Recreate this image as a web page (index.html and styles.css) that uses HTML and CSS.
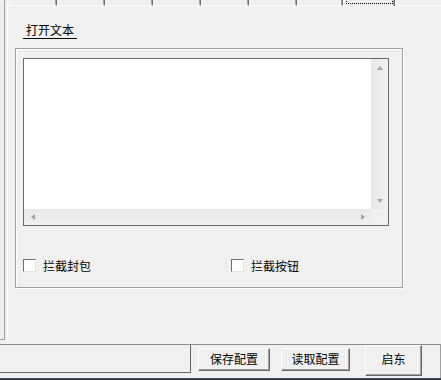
FILE: index.html
```html
<!DOCTYPE html>
<html>
<head>
<meta charset="utf-8">
<link rel="stylesheet" href="styles.css">
</head>
<body>
<div class="win">
  <div class="main">
    <div class="stub"></div>
    <div class="tabctrl">
      <div class="tabs">
        <div class="lead"></div>
        <div class="tab"></div>
        <div class="tab"></div>
        <div class="tab"></div>
        <div class="tab"></div>
        <div class="tab"></div>
        <div class="tab"></div>
        <div class="tab t7"></div>
        <div class="tab sel"><div class="focus"></div></div>
        <div class="tab last"></div>
      </div>
      <div class="page">
        <div class="head">打开文本</div>
        <div class="group">
          <div class="memo">
            <div class="memo-top">
              <div class="text"></div>
              <div class="vscroll">
                <div class="sbtn"><span class="arr up"></span></div>
                <div class="sbtn"><span class="arr down"></span></div>
              </div>
            </div>
            <div class="memo-bottom">
              <div class="hscroll">
                <div class="sbtn"><span class="arr left"></span></div>
                <div class="sbtn"><span class="arr right"></span></div>
              </div>
              <div class="corner"></div>
            </div>
          </div>
          <div class="checks">
            <label class="chk c1"><span class="box"></span><span class="lbl">拦截封包</span></label>
            <label class="chk"><span class="box"></span><span class="lbl">拦截按钮</span></label>
          </div>
        </div>
      </div>
    </div>
  </div>
  <div class="bottom">
    <div class="status"></div>
    <div class="btn b1">保存配置</div>
    <div class="btn b2">读取配置</div>
    <div class="btn b3">启东</div>
  </div>
  <div class="frame"></div>
</div>
</body>
</html>
```
FILE: styles.css
```css
* { box-sizing: border-box; margin: 0; padding: 0; }
html, body { width: 441px; height: 380px; overflow: hidden; }
body {
  background: #f0f0f0;
  font-family: "Noto Sans CJK SC", "Noto Sans", sans-serif;
  font-size: 12px;
  color: #000;
}
.win { display: flex; flex-direction: column; width: 441px; height: 380px; }
.main { display: flex; height: 344px; flex: none; }
.stub {
  width: 5px; height: 340px; flex: none;
  border-right: 1px solid #a0a0a0;
  border-bottom: 1px solid #a0a0a0;
}
.tabctrl { margin-left: 2px; flex: 1; display: flex; flex-direction: column; min-width: 0; }
.tabs { display: flex; height: 6px; flex: none; }
.lead { width: 2px; flex: none; border-bottom: 1px solid #fff; }
.tab {
  width: 48px; flex: none;
  border-left: 1px solid #fff;
  border-right: 1px solid #696969;
  border-bottom: 1px solid #fff;
  box-shadow: inset -1px 0 0 #a0a0a0;
}
.tab.t7 { width: 46px; }
.tab.sel { width: 52px; border-bottom: none; display: flex; align-items: flex-end; }
.tab.last { width: 60px; }
.focus {
  margin-left: 2px; width: 47px; height: 6px; margin-bottom: 2px;
  border: 1px dotted #000; border-top: none;
}
.page { flex: 1; border-left: 1px solid #fff; display: flex; flex-direction: column; }
.head {
  margin: 16px 0 0 15px;
  width: 54px; height: 17px;
  line-height: 16px;
  padding-left: 3px;
  border-bottom: 1px solid #000;
}
.group {
  margin: 9px 0 0 7px;
  width: 388px; height: 240px;
  border: 1px solid #a0a0a0;
  box-shadow: inset 1px 1px 0 #fff, 1px 1px 0 #fff;
  padding: 9px 0 0 7px;
}
.memo {
  width: 366px; height: 168px;
  border: 1px solid #6a6a6a;
  display: flex; flex-direction: column;
}
.memo-top { display: flex; height: 150px; }
.text { flex: 1; background: #fff; }
.vscroll {
  width: 17px;
  background: linear-gradient(to right, #e8e8e8, #f0f0f0);
  display: flex; flex-direction: column; justify-content: space-between;
}
.memo-bottom { display: flex; height: 16px; }
.hscroll {
  flex: 1;
  background: linear-gradient(to bottom, #e8e8e8, #f0f0f0);
  display: flex; justify-content: space-between;
}
.corner { width: 17px; background: #f0f0f0; }
.sbtn { width: 17px; height: 17px; display: flex; align-items: center; justify-content: center; }
.hscroll .sbtn { height: 16px; }
.arr { width: 0; height: 0; display: block; }
.arr.up { border-left: 3.5px solid transparent; border-right: 3.5px solid transparent; border-bottom: 4px solid #a3a3a3; }
.arr.down { border-left: 3.5px solid transparent; border-right: 3.5px solid transparent; border-top: 4px solid #a3a3a3; }
.arr.left { border-top: 3.5px solid transparent; border-bottom: 3.5px solid transparent; border-right: 4px solid #a3a3a3; }
.arr.right { border-top: 3.5px solid transparent; border-bottom: 3.5px solid transparent; border-left: 4px solid #a3a3a3; }
.checks { display: flex; margin-top: 33px; }
.chk { display: flex; align-items: flex-start; flex: none; line-height: 13px; }
.chk.c1 { width: 208px; }
.box {
  width: 13px; height: 13px; background: #fff; flex: none;
  border-top: 1px solid #6e6e6e; border-left: 1px solid #6e6e6e;
  border-right: 1px solid #e3e3e3; border-bottom: 1px solid #e3e3e3;
}
.lbl { margin-left: 7px; color: #000; }
.bottom {
  display: flex; align-items: flex-start;
  height: 34px; flex: none;
  border-top: 1px solid #8c8c8c;
  border-right: 1px solid #a0a0a0;
}
.status {
  width: 191px; height: 28px; flex: none;
  border-right: 1px solid #646464;
  border-bottom: 1px solid #646464;
}
.btn {
  flex: none; text-align: center;
  border-top: 1px solid #fff; border-left: 1px solid #fff;
  border-right: 1px solid #696969; border-bottom: 1px solid #696969;
  box-shadow: inset -1px -1px 0 #a0a0a0;
  background: #f0f0f0;
}
.b1 { margin: 3px 0 0 7px; width: 72px; height: 23px; line-height: 20px; }
.b2 { margin: 3px 0 0 11px; width: 69px; height: 23px; line-height: 20px; }
.b3 { margin: 0 0 0 15px; width: 57px; height: 31px; padding-top: 6px; line-height: 14px; }
.frame { height: 2px; flex: none; background: linear-gradient(to bottom, #4a5664, #1e2730); }
```
